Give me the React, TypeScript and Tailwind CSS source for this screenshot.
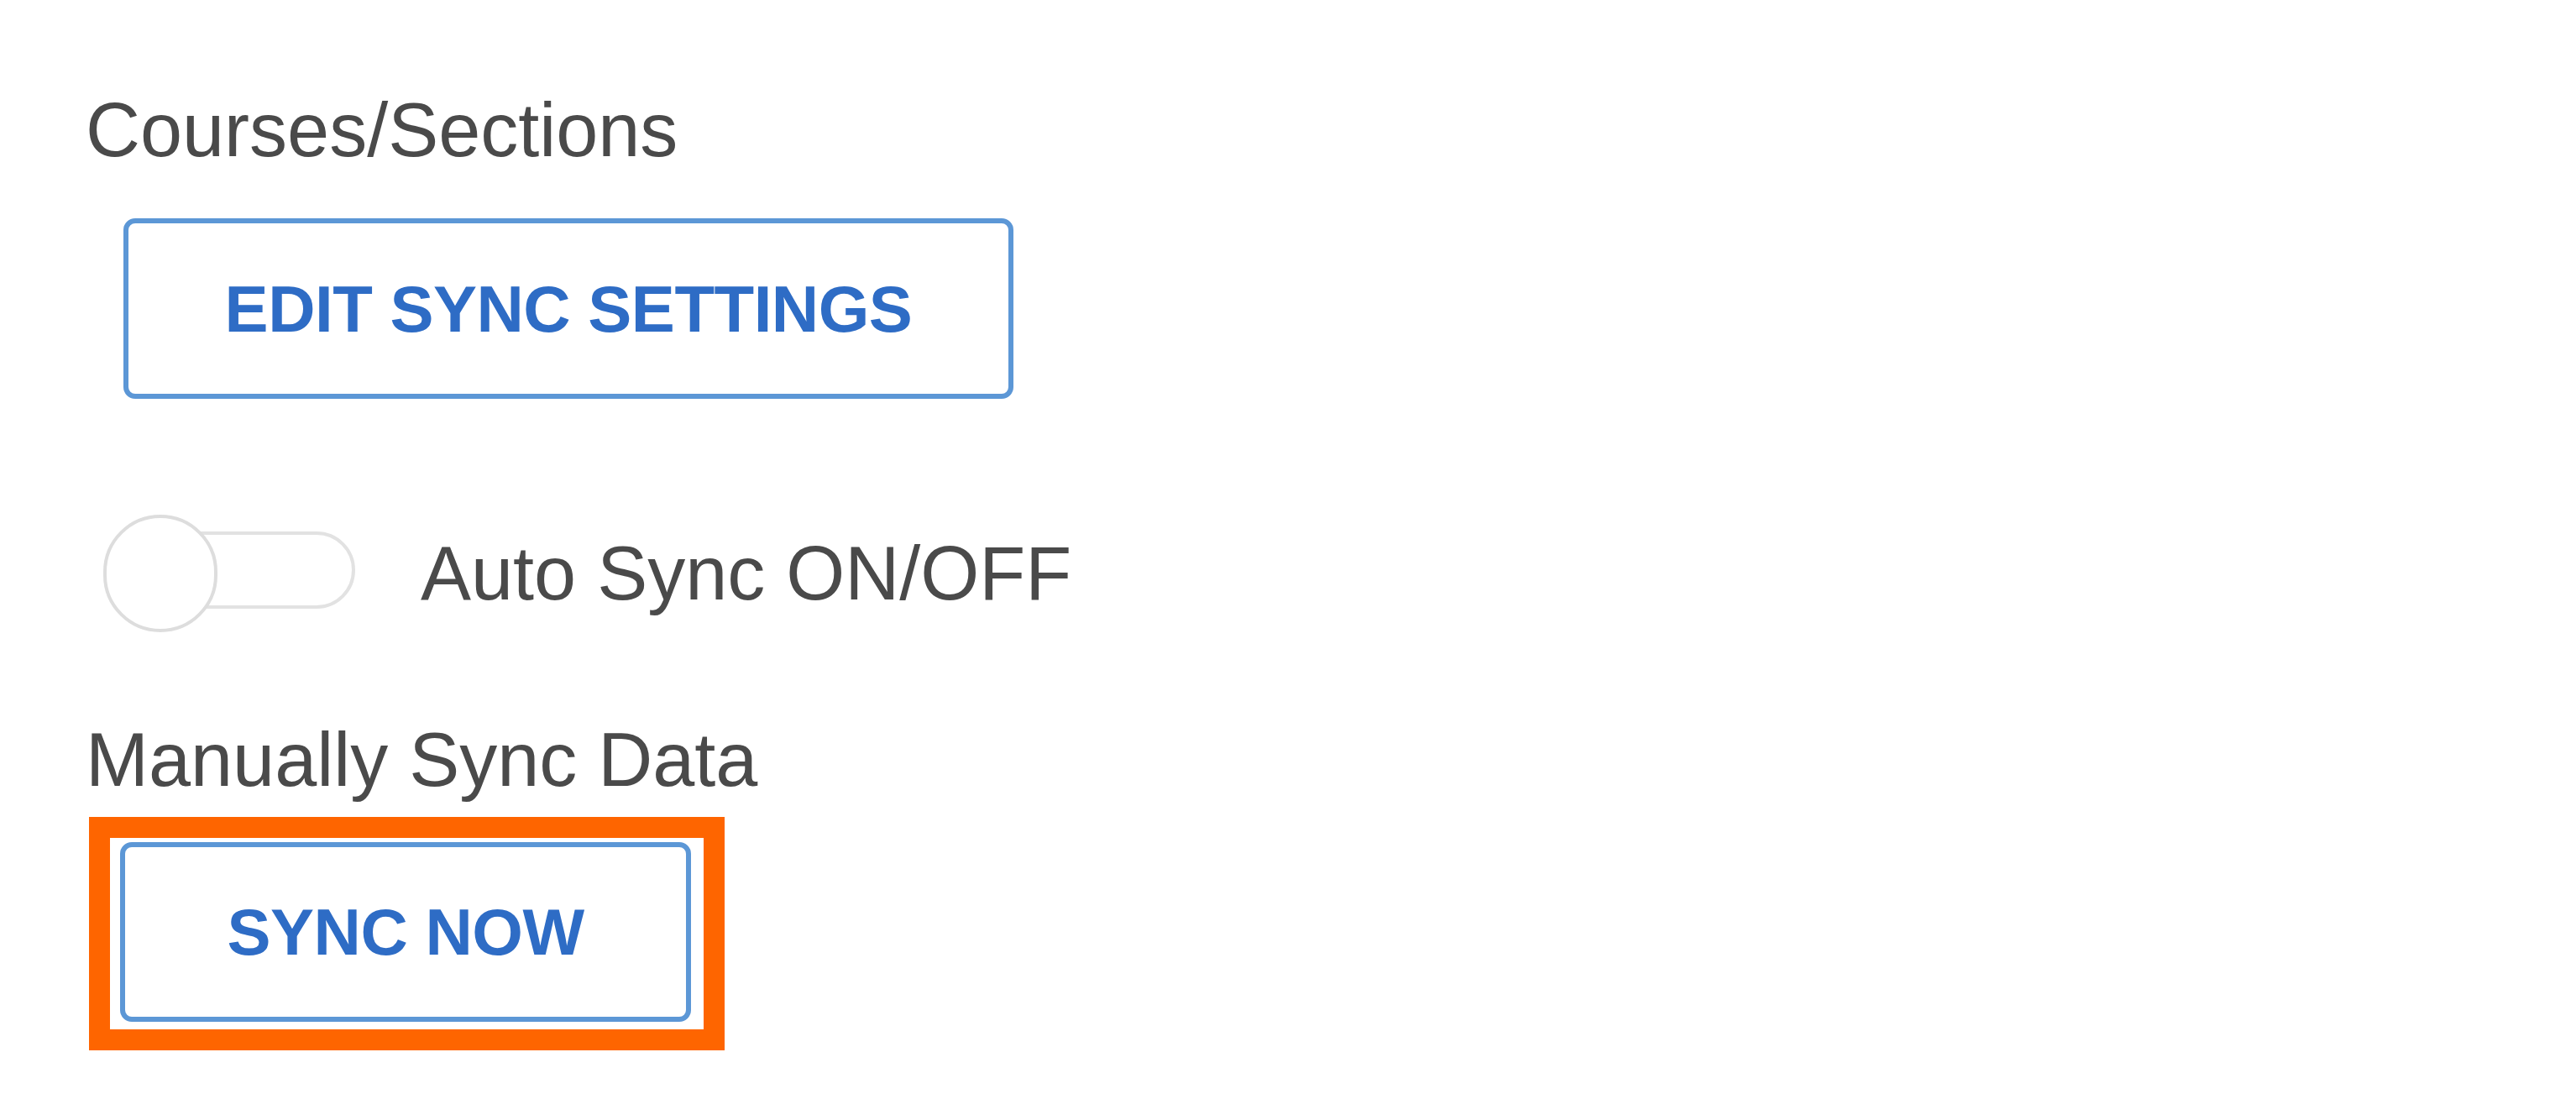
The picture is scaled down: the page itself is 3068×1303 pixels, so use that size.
import { useState } from "react";

// Sync settings panel: course sync button, auto-sync toggle, manual sync.
const LABEL = "text-[90px] leading-[90px] text-[#4a4a4a] [font-family:'Liberation_Sans',Arial,sans-serif]";
const BTN =
  "flex items-center justify-center rounded-[14px] border-[6px] border-[#5c97d6] bg-white text-[78px] font-bold leading-none tracking-[-0.5px] text-[#2e6cc5] [font-family:'Liberation_Sans',Arial,sans-serif]";

function Toggle({ on, onChange }: { on: boolean; onChange: (v: boolean) => void }) {
  return (
    <button
      type="button"
      role="switch"
      aria-checked={on}
      onClick={() => onChange(!on)}
      className="relative h-[140px] w-[300px] shrink-0"
    >
      {/* track */}
      <span className="absolute left-[40px] top-[20px] h-[92px] w-[260px] rounded-full border-[4px] border-[#e2e2e2] bg-white" />
      {/* knob */}
      <span
        className={
          on
            ? "absolute left-[164px] top-0 h-[140px] w-[136px] rounded-full border-[4px] border-[#dddddd] bg-white"
            : "absolute left-0 top-0 h-[140px] w-[136px] rounded-full border-[4px] border-[#dddddd] bg-white"
        }
      />
    </button>
  );
}

export default function App() {
  const [auto, setAuto] = useState(false);

  return (
    <div className="min-h-screen w-full bg-white">
      <div className="flex flex-col items-start pl-[102px] pt-[110px]">
        <div className={LABEL}>Courses/Sections</div>

        <button type="button" className={`${BTN} ml-[45px] mt-[60px] h-[215px] w-[1060px]`}>
          EDIT SYNC SETTINGS
        </button>

        <div className="ml-[21px] mt-[138px] flex items-center gap-[78px]">
          <Toggle on={auto} onChange={setAuto} />
          <span className={LABEL}>Auto Sync ON/OFF</span>
        </div>

        <div className={`${LABEL} mt-[107px]`}>Manually Sync Data</div>

        {/* highlight frame */}
        <div className="ml-[4px] mt-[23px] border-[25px] border-[#fe6500] pb-[9px] pl-[12px] pr-[15px] pt-[5px]">
          <button type="button" className={`${BTN} h-[214px] w-[680px]`}>
            SYNC NOW
          </button>
        </div>
      </div>
    </div>
  );
}
